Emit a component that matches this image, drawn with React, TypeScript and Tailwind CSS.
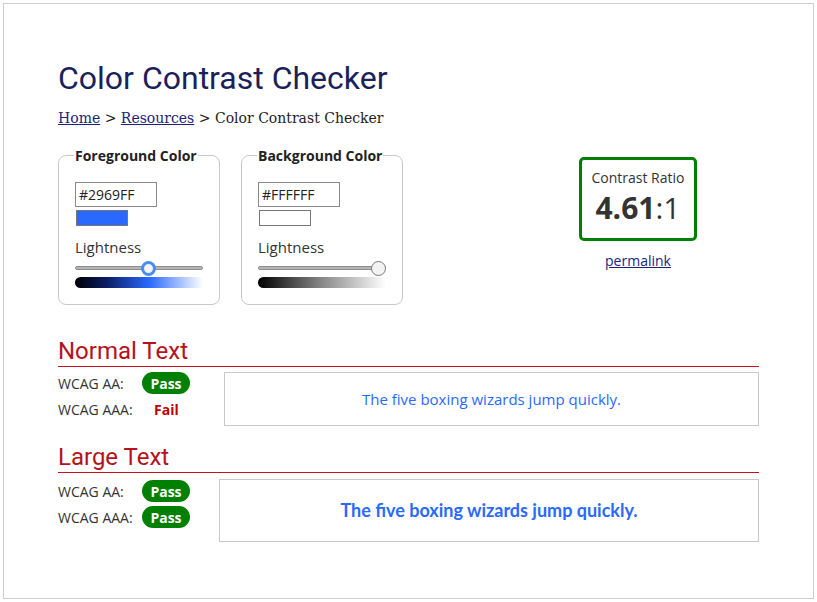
import React from "react";

const ui = { fontFamily: '"Open Sans", "Noto Sans", sans-serif' };
const head = { fontFamily: 'Roboto, "Liberation Sans", sans-serif' };
const serif = { fontFamily: '"DejaVu Serif", "Liberation Serif", serif' };

interface PickerProps {
  legend: string;
  hex: string;
  swatch: string;
  thumb: number;
  gradient: string;
  thumbRing: string;
}

const Picker = ({ legend, hex, swatch, thumb, gradient, thumbRing }: PickerProps) => (
  <fieldset className="w-[162px] h-[160px] border border-[#c8c8c8] rounded-[8px] px-[16px] pt-[16px]">
    <legend className="font-bold text-[14px] text-[#222] px-[1px] -ml-[1px]">{legend}</legend>
    <div className="w-[82px] h-[25px] border border-[#8a8a8a] text-[14px] text-[#222] px-[3px] leading-[23px]">
      {hex}
    </div>
    <div className={`w-[52px] h-[16px] mt-[3px] ml-[1px] border border-[#777] ${swatch}`} />
    <div className="text-[15px] text-[#333] mt-[11px] leading-[20px]">Lightness</div>
    <div className="relative mt-[4px] h-[14px] w-[128px]">
      <div className="absolute left-0 right-0 top-[5px] h-[4px] rounded-full bg-[#b5b5b5] border border-[#8e8e8e]" />
      <div
        className={`absolute top-0 w-[15px] h-[15px] rounded-full bg-[#f3f3f3] ${thumbRing}`}
        style={{ left: thumb }}
      />
    </div>
    <div className="h-[11px] w-[128px] rounded-l-full mt-[2px]" style={{ background: gradient }} />
  </fieldset>
);

const Pass = () => (
  <span className="inline-flex items-center justify-center w-[48px] h-[22px] rounded-full bg-[#008000] text-white font-bold text-[14px]">
    Pass
  </span>
);

const Row = ({ label, children }: { label: string; children: React.ReactNode }) => (
  <div className="flex items-center h-[22px]">
    <span className="w-[84px] text-[14px] text-[#333]">{label}</span>
    {children}
  </div>
);

const Heading = ({ children, className }: { children: React.ReactNode; className: string }) => (
  <div className={className}>
    <h2 className="text-[24px] leading-[28px] text-[#b5121b] border-b border-b-[#c8101e] pb-[1px]" style={head}>
      {children}
    </h2>
  </div>
);

export default function App() {
  return (
    <div className="w-[817px] h-[602px] bg-white p-[3px]" style={ui}>
      <div className="w-[811px] h-[596px] border border-[#cfcfcf] px-[54px] pt-[55px]">
        <h1 className="text-[32px] leading-[38px] text-[#1b1f5c]" style={head}>
          Color Contrast Checker
        </h1>
        <div className="mt-[12px] text-[14px] text-[#222] leading-[18px]" style={serif}>
          <a className="underline text-[#1a237e]">Home</a> &gt;{" "}
          <a className="underline text-[#1a237e]">Resources</a> &gt; Color Contrast Checker
        </div>

        <div className="flex mt-[18px]">
          <Picker
            legend="Foreground Color"
            hex="#2969FF"
            swatch="bg-[#2969ff]"
            thumb={66}
            thumbRing="border-[3px] border-[#4a8df0]"
            gradient="linear-gradient(to right, #000 0%, #0a1e66 25%, #2969ff 58%, #ffffff 100%)"
          />
          <div className="w-[21px]" />
          <Picker
            legend="Background Color"
            hex="#FFFFFF"
            swatch="bg-white"
            thumb={113}
            thumbRing="border border-[#777]"
            gradient="linear-gradient(to right, #000 0%, #888 50%, #ffffff 100%)"
          />
          <div className="flex-1 flex flex-col items-center pl-[114px] pt-[12px]">
            <div className="w-[118px] h-[84px] border-[3px] border-[#008000] rounded-[5px] flex flex-col items-center pt-[9px]">
              <span className="text-[14px] text-[#333] leading-[18px]">Contrast Ratio</span>
              <span className="text-[30px] text-[#333] leading-[36px] mt-[3px]">
                <b>4.61</b>:1
              </span>
            </div>
            <a className="mt-[9px] text-[14px] underline text-[#1a237e]">permalink</a>
          </div>
        </div>

        <Heading className="mt-[32px]">Normal Text</Heading>
        <div className="flex mt-[5px]">
          <div className="w-[166px] flex flex-col gap-[4px]">
            <Row label="WCAG AA:">
              <Pass />
            </Row>
            <Row label="WCAG AAA:">
              <span className="ml-[12px] text-[14px] font-bold text-[#c00000]">Fail</span>
            </Row>
          </div>
          <div className="flex-1 h-[54px] border border-[#c8c8c8] flex items-center justify-center text-[15px] text-[#2969ff]">
            The five boxing wizards jump quickly.
          </div>
        </div>

        <Heading className="mt-[17px]">Large Text</Heading>
        <div className="flex mt-[6px]">
          <div className="w-[161px] flex flex-col gap-[4px] pt-[1px]">
            <Row label="WCAG AA:">
              <Pass />
            </Row>
            <Row label="WCAG AAA:">
              <Pass />
            </Row>
          </div>
          <div
            className="flex-1 h-[63px] border border-[#c8c8c8] flex items-center justify-center text-[18px] font-bold text-[#2969ff]"
            style={{ fontFamily: 'Lato, "Open Sans", sans-serif' }}
          >
            The five boxing wizards jump quickly.
          </div>
        </div>
      </div>
    </div>
  );
}
